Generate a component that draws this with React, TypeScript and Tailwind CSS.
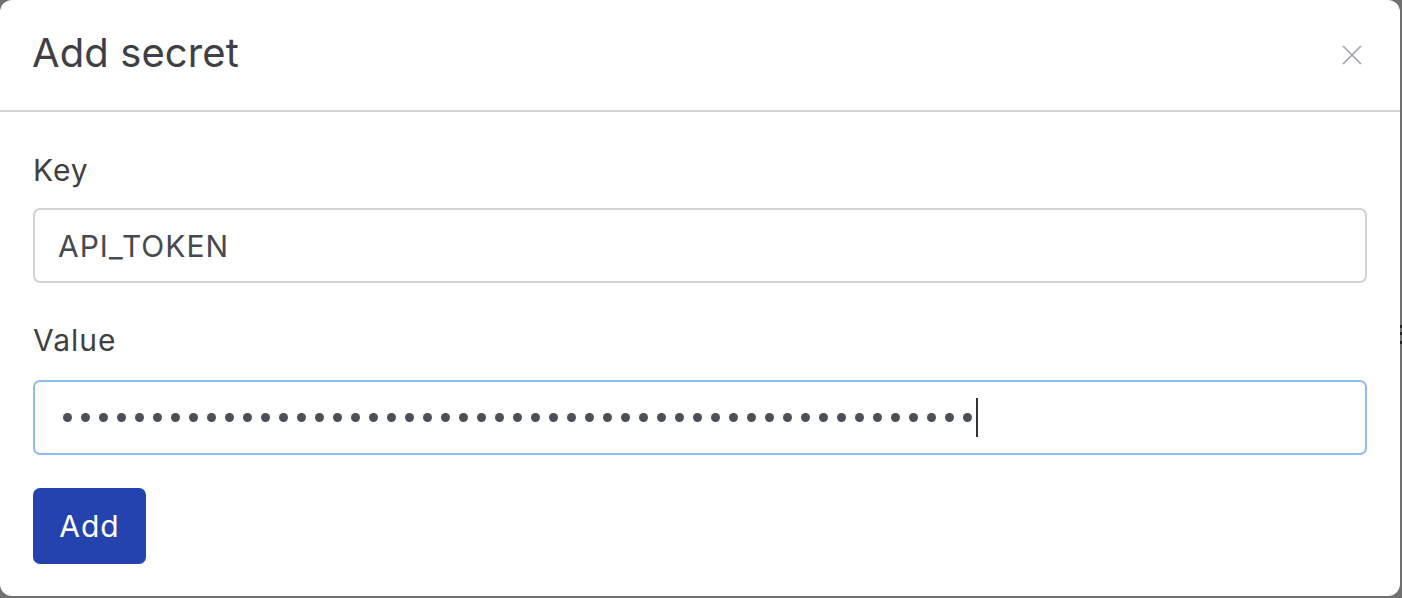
import { useState } from "react";

const DOTS = 51;

export default function App() {
  const [key, setKey] = useState("API_TOKEN");

  return (
    <div className="w-[1402px] h-[598px] bg-[#6f6f6f] overflow-hidden flex font-['Inter',sans-serif]">
      <div className="w-[1400px] h-[596px] shrink-0 bg-white rounded-[12px] flex flex-col">
        {/* Header */}
        <div className="h-[112px] shrink-0 flex items-center justify-between pl-[32px] pr-[38px] border-b-2 border-[#d4d4d8]">
          <h1 className="mb-[5px] text-[40px] leading-none text-[#3f3f46] tracking-[0.1px]">Add secret</h1>
          <button className="w-[20px] h-[20px] text-[#a1a1aa]" aria-label="Close">
            <svg viewBox="0 0 20 20" className="w-[20px] h-[20px]" fill="none" stroke="currentColor" strokeWidth="1.6">
              <path d="M1 1L19 19M19 1L1 19" />
            </svg>
          </button>
        </div>

        {/* Body */}
        <div className="flex flex-col px-[33px] pt-[38px]">
          <label className="text-[30px] leading-[40px] tracking-[1px] text-[#3f3f46]">Key</label>
          <input
            value={key}
            onChange={(e) => setKey(e.target.value)}
            className="mt-[18px] w-[1334px] h-[75px] border-2 border-[#d4d4d8] rounded-[7px] px-[23px] text-[30px] tracking-[1px] text-[#46494f] outline-none"
          />

          <label className="mt-[37px] text-[30px] leading-[40px] tracking-[1px] text-[#3f3f46]">Value</label>
          <div className="mt-[20px] w-[1334px] h-[75px] border-2 border-[#8fbcf7] rounded-[7px] pl-[28px] flex items-center">
            <div className="flex items-center gap-[9px]">
              {Array.from({ length: DOTS }).map((_, i) => (
                <span key={i} className="block w-[9px] h-[9px] rounded-full bg-[#4b5058]" />
              ))}
            </div>
            <span className="block ml-[4px] w-[2px] h-[39px] bg-[#333]" />
          </div>

          <button className="mt-[33px] w-[113px] h-[76px] rounded-[7px] bg-[#2443af] text-white text-[30px] tracking-[1px]">
            Add
          </button>
        </div>
      </div>

      {/* page behind the dialog, visible at the edge */}
      <div className="w-[2px] flex flex-col">
        <span className="block mt-[325px] h-[3px] bg-[#222]" />
        <span className="block mt-[4px] h-[3px] bg-[#222]" />
        <span className="block mt-[6px] h-[3px] bg-[#222]" />
      </div>
    </div>
  );
}
